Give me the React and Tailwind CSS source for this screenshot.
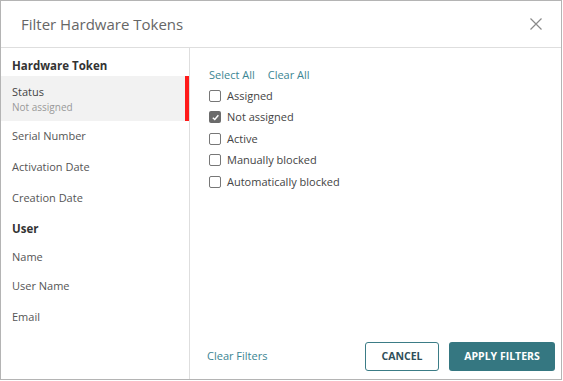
import React from "react";

const font = { fontFamily: '"Open Sans", "Noto Sans", sans-serif' };

function Box({ checked, label }) {
  return (
    <label className="flex items-center h-[21.5px] gap-[6px] text-[11px] text-[#444]">
      {checked ? (
        <span className="w-[12px] h-[12px] rounded-[2px] bg-[#6b6b6b] flex items-center justify-center">
          <svg width="9" height="9" viewBox="0 0 10 10">
            <path d="M2 5.2 L4.2 7.3 L8.2 2.6" fill="none" stroke="#fff" strokeWidth="1.6" />
          </svg>
        </span>
      ) : (
        <span className="w-[12px] h-[12px] rounded-[2px] border border-[#777] bg-white" />
      )}
      <span>{label}</span>
    </label>
  );
}

function Item({ children, h = "h-[31px]" }) {
  return <div className={`${h} flex items-center px-[11px] text-[11px] text-[#555]`}>{children}</div>;
}

export default function App() {
  return (
    <div style={font} className="w-[562px] h-[380px] border border-[#b4b4b4] bg-white flex flex-col">
      <div className="h-[47px] border-b border-[#dedede] flex items-center justify-between pl-[20px] pr-[19px] shrink-0">
        <div className="text-[15px] text-[#666]">Filter Hardware Tokens</div>
        <svg width="12" height="12" viewBox="0 0 12 12">
          <path d="M0.5 0.5 L11.5 11.5 M11.5 0.5 L0.5 11.5" stroke="#8a8a8a" strokeWidth="1.2" />
        </svg>
      </div>
      <div className="flex flex-1 min-h-0">
        <div className="w-[189px] border-r border-[#dedede] shrink-0 pt-[6px]">
          <div className="h-[22px] flex items-center pt-[2px] px-[11px] text-[11.5px] font-bold text-[#333]">Hardware Token</div>
          <div className="h-[45px] bg-[#f2f2f2] flex">
            <div className="flex-1 px-[11px] pt-[2px] flex flex-col justify-center">
              <div className="text-[11px] text-[#444] leading-[16px]">Status</div>
              <div className="text-[10px] text-[#999] leading-[15px]">Not assigned</div>
            </div>
            <div className="w-[4px] bg-[#ff1a1a]" />
          </div>
          <Item>Serial Number</Item>
          <Item>Activation Date</Item>
          <Item>Creation Date</Item>
          <div className="h-[29px] flex items-center px-[11px] text-[11.5px] font-bold text-[#333]">User</div>
          <Item h="h-[28px]">Name</Item>
          <Item>User Name</Item>
          <Item>Email</Item>
        </div>
        <div className="flex-1 flex flex-col pl-[19px] pr-[6px]">
          <div className="pt-[18px] flex-1">
            <div className="flex gap-[13px] text-[11px] text-[#3b8593] h-[18px] items-center">
              <span>Select All</span>
              <span>Clear All</span>
            </div>
            <div className="mt-[1px]">
              <Box label="Assigned" />
              <Box checked label="Not assigned" />
              <Box label="Active" />
              <Box label="Manually blocked" />
              <Box label="Automatically blocked" />
            </div>
          </div>
          <div className="h-[47px] pt-[2px] flex items-center justify-between">
            <span className="text-[11px] text-[#3b8593] -ml-[2px]">Clear Filters</span>
            <div className="flex gap-[10px]">
              <button className="w-[74px] h-[29px] rounded-[3px] border border-[#3b7c86] text-[10.5px] font-bold text-[#2f4f5a] bg-white">CANCEL</button>
              <button className="w-[106px] h-[29px] rounded-[3px] bg-[#357781] text-[10.5px] font-bold text-white">APPLY FILTERS</button>
            </div>
          </div>
        </div>
      </div>
    </div>
  );
}
